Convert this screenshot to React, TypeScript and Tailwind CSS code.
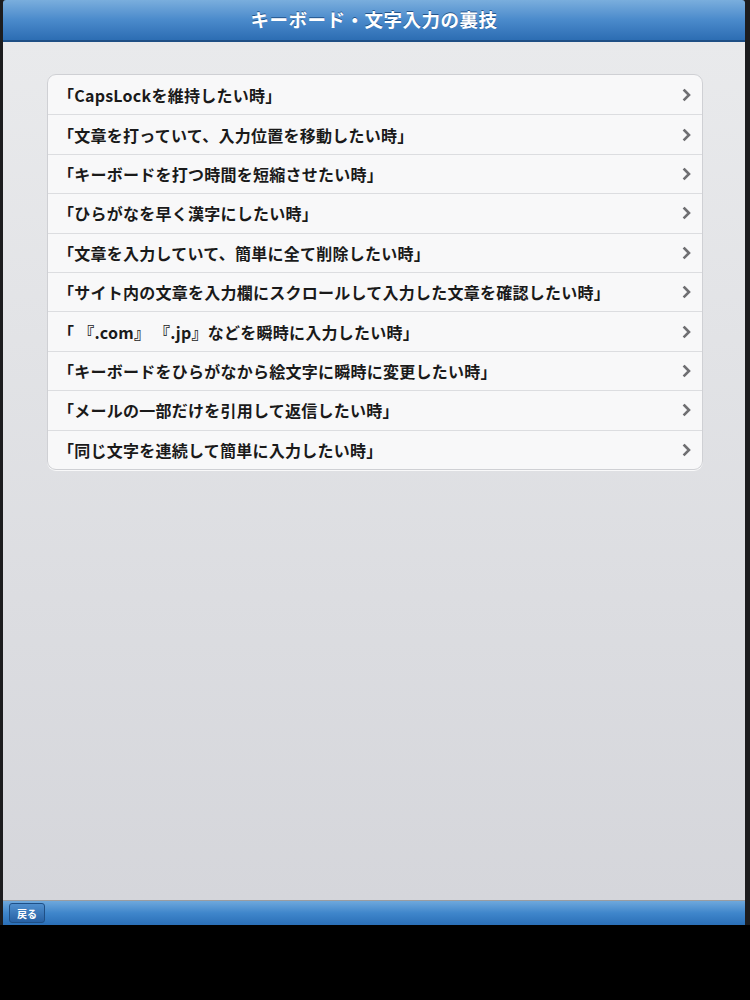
import React from "react";

const items = [
  "「CapsLockを維持したい時」",
  "「文章を打っていて、入力位置を移動したい時」",
  "「キーボードを打つ時間を短縮させたい時」",
  "「ひらがなを早く漢字にしたい時」",
  "「文章を入力していて、簡単に全て削除したい時」",
  "「サイト内の文章を入力欄にスクロールして入力した文章を確認したい時」",
  "「 『.com』 『.jp』などを瞬時に入力したい時」",
  "「キーボードをひらがなから絵文字に瞬時に変更したい時」",
  "「メールの一部だけを引用して返信したい時」",
  "「同じ文字を連続して簡単に入力したい時」",
];

const font = {
  fontFamily: '"Noto Sans CJK JP", "Noto Sans", sans-serif',
};

function Chevron() {
  return (
    <svg width="10" height="14" viewBox="0 0 10 14" className="shrink-0">
      <path d="M2.5 2.5 L7 7 L2.5 11.5" fill="none" stroke="#6f6f72" strokeWidth="2.6" strokeLinecap="square" />
    </svg>
  );
}

export default function App() {
  return (
    <div className="w-[750px] h-[1000px] bg-black flex flex-col" style={font}>
      <div className="flex flex-col h-[925px] bg-[#1c1c1e] pl-[3px] pr-[5px]">
        <div className="h-[42px] shrink-0 flex items-center justify-center bg-gradient-to-b from-[#7aaedd] via-[#4a8acb] to-[#2c6db3] border-b-2 border-[#1f4f85] rounded-t-[3px]">
          <span className="text-white text-[18.5px] font-bold tracking-[0.5px] [text-shadow:0_-1px_0_rgba(0,40,90,0.6)]">
            キーボード・文字入力の裏技
          </span>
        </div>
        <div className="flex-1 bg-gradient-to-b from-[#e9eaec] to-[#d5d6db] pt-[32px] pl-[44px] pr-[42px] border-b border-[#9a9ca0]">
          <div className="bg-[#f8f8f9] rounded-[9px] border border-[#cfd0d4] shadow-[0_1px_0_rgba(255,255,255,0.8)] overflow-hidden">
            {items.map((t, i) => (
              <div
                key={i}
                className={`h-[39.4px] flex items-center justify-between pl-[10px] pr-[10px] ${i > 0 ? "border-t border-[#dcdde0]" : ""}`}
              >
                <span className="text-[16px] tracking-[0.25px] font-bold text-[#1a1a1a] whitespace-pre">{t}</span>
                <Chevron />
              </div>
            ))}
          </div>
        </div>
        <div className="h-[24px] shrink-0 flex items-center pl-[6px] bg-gradient-to-b from-[#6ea8dc] via-[#3f86cb] to-[#2a6fb7]">
          <div className="h-[20px] w-[36px] flex items-center justify-center rounded-[3px] bg-gradient-to-b from-[#4f8fcf] to-[#2761a3] border border-[#1f4f85]">
            <span className="text-white text-[10px] font-bold">戻る</span>
          </div>
        </div>
      </div>
    </div>
  );
}
